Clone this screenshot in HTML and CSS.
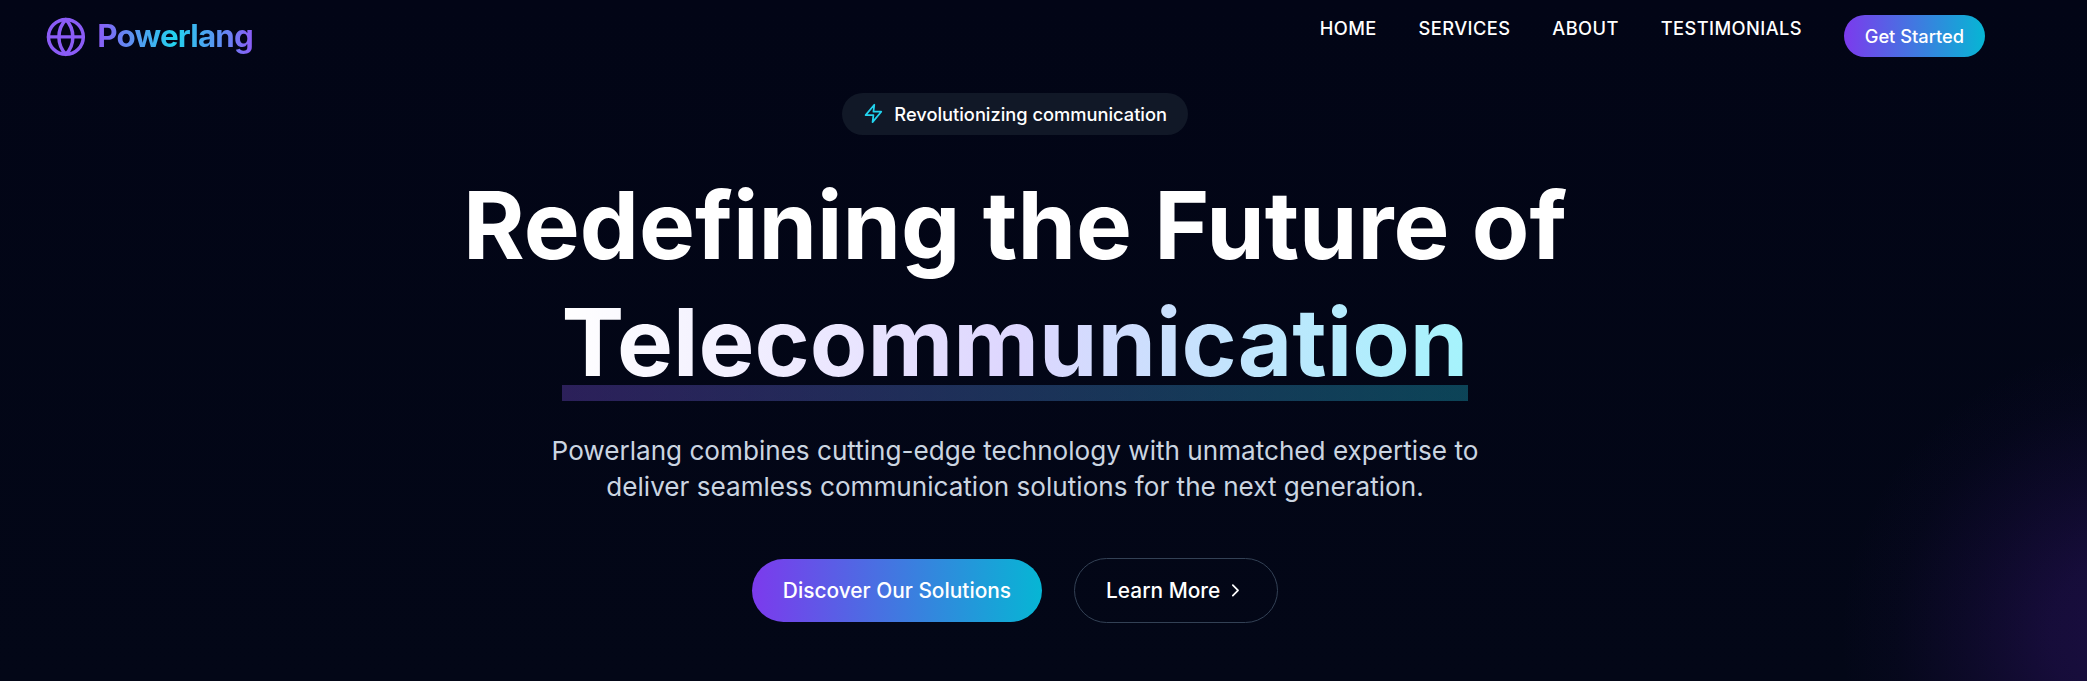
FILE: index.html
```html
<!DOCTYPE html>
<html lang="en">
<head>
<meta charset="utf-8">
<title>Powerlang</title>
<link rel="stylesheet" href="styles.css">
</head>
<body>
<div class="page">
  <header class="header">
    <a class="brand">
      <svg class="brand-icon" viewBox="0 0 24 24" fill="none" stroke="currentColor" stroke-width="2" stroke-linecap="round" stroke-linejoin="round"><circle cx="12" cy="12" r="10"/><path d="M12 2a14.5 14.5 0 0 0 0 20 14.5 14.5 0 0 0 0-20"/><path d="M2 12h20"/></svg>
      <span class="brand-name">Powerlang</span>
    </a>
    <nav class="nav">
      <a class="nav-link">HOME</a>
      <a class="nav-link">SERVICES</a>
      <a class="nav-link">ABOUT</a>
      <a class="nav-link">TESTIMONIALS</a>
      <a class="nav-cta">Get Started</a>
    </nav>
  </header>
  <main class="hero">
    <div class="badge">
      <svg class="badge-icon" viewBox="0 0 24 24" fill="none" stroke="currentColor" stroke-width="2" stroke-linecap="round" stroke-linejoin="round"><polygon points="13 2 3 14 12 14 11 22 21 10 12 10 13 2"/></svg>
      <span>Revolutionizing communication</span>
    </div>
    <h1 class="title">
      <span class="title-line">Redefining the Future of</span>
      <span class="title-accent"><span class="title-gradient">Telecommunication</span></span>
    </h1>
    <p class="lead">Powerlang combines cutting-edge technology with unmatched expertise to<br>deliver seamless communication solutions for the next generation.</p>
    <div class="actions">
      <a class="button button-primary">Discover Our Solutions</a>
      <a class="button button-outline">Learn More
        <svg class="chevron" viewBox="0 0 24 24" fill="none" stroke="currentColor" stroke-width="2" stroke-linecap="round" stroke-linejoin="round"><path d="m9 18 6-6-6-6"/></svg>
      </a>
    </div>
  </main>
</div>
</body>
</html>
```
FILE: styles.css
```css
html { font-size: 20.89px; }
* { box-sizing: border-box; }
body {
  margin: 0;
  font-family: Inter, "Liberation Sans", sans-serif;
  color: #fff;
  background: #020617;
}
.page {
  height: 681px;
  overflow: hidden;
  padding-right: 57px;
  background:
    radial-gradient(circle at 2130px 635px, rgba(91, 33, 182, 0.26) 0, rgba(91, 33, 182, 0.22) 80px, rgba(91, 33, 182, 0.11) 165px, rgba(91, 33, 182, 0.03) 235px, transparent 290px),
    linear-gradient(#020516, #030717);
}
.header {
  display: flex;
  justify-content: space-between;
  align-items: flex-start;
  height: 72px;
  padding: 15px 45px 0 45px;
}
.brand { display: flex; align-items: center; gap: 0.5rem; }
.brand-icon { width: 2rem; height: 2rem; color: #8b5cf6; }
.brand-name {
  font-size: 1.5rem;
  line-height: 2.08rem;
  font-weight: 700;
  letter-spacing: -0.025em;
  color: transparent;
  background: linear-gradient(90deg, #8b5cf6, #22d3ee, #8b5cf6);
  -webkit-background-clip: text;
  background-clip: text;
}
.nav { display: flex; gap: 2rem; align-items: flex-start; }
.nav-link {
  font-size: 0.875rem;
  line-height: 1.3rem;
  font-weight: 500;
  letter-spacing: 0.024em;
}
.nav-cta {
  height: 2rem;
  line-height: 2.05rem;
  padding: 0 1rem;
  border-radius: 1rem;
  font-size: 0.875rem;
  font-weight: 500;
  background: linear-gradient(90deg, #7c3aed, #06b6d4);
}
.hero { display: flex; flex-direction: column; align-items: center; padding-top: 21px; }
.badge {
  display: flex;
  align-items: center;
  gap: 0.5rem;
  height: 2rem;
  padding: 0 1rem;
  border-radius: 1rem;
  background: #111827;
  font-size: 0.875rem;
  font-weight: 500;
}
.badge-icon { width: 1rem; height: 1rem; color: #22d3ee; }
.title {
  display: flex;
  flex-direction: column;
  align-items: center;
  margin: 32px 0 0;
  font-size: 4.5rem;
  line-height: 117px;
  font-weight: 700;
}
.title-accent { position: relative; }
.title-accent::after {
  content: "";
  position: absolute;
  left: 0;
  right: 0;
  top: 101px;
  height: 16px;
  background: linear-gradient(90deg, #8b5cf6, #22d3ee);
  opacity: 0.3;
}
.title-gradient {
  color: transparent;
  background: linear-gradient(90deg, #fff, #ddd6fe, #a5f3fc);
  -webkit-background-clip: text;
  background-clip: text;
}
.lead {
  margin: 32px 0 0;
  font-size: 1.25rem;
  line-height: 36px;
  color: #cbd5e1;
  text-align: center;
}
.actions { display: flex; align-items: center; gap: 1.5rem; margin-top: 53px; }
.button {
  display: flex;
  align-items: center;
  height: 3rem;
  padding: 0 1.5rem;
  border-radius: 2rem;
  font-size: 1rem;
  font-weight: 500;
}
.button-primary { background: linear-gradient(90deg, #7c3aed, #06b6d4); }
.button-outline { height: 65px; border: 1px solid #334155; }
.chevron { width: 1rem; height: 1rem; margin-left: 5px; }
```
